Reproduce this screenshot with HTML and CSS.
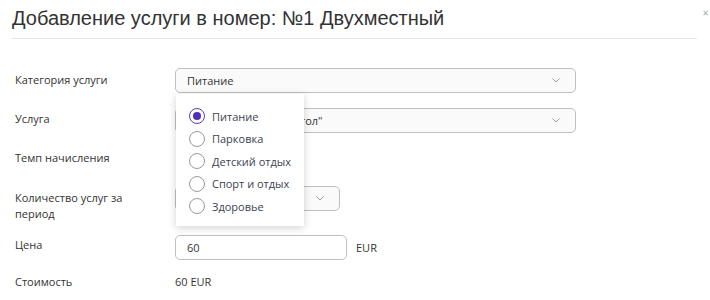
FILE: index.html
```html
<!DOCTYPE html>
<html lang="ru">
<head>
<meta charset="utf-8">
<link rel="stylesheet" href="styles.css">
</head>
<body>
<div class="modal">
  <div class="header">
    <h1 class="title">Добавление услуги в номер: №1 Двухместный</h1>
    <span class="close">&#x2715;</span>
  </div>
  <div class="form">
    <div class="row r1">
      <div class="label">Категория услуги</div>
      <div class="field">
        <div class="select wide"><span>Питание</span><svg class="chev" viewBox="0 0 8 5"><path d="M0.5 0.5 L4 4 L7.5 0.5" fill="none" stroke="#999" stroke-width="1"/></svg></div>
        <div class="menu">
          <div class="opt"><span class="radio on"></span>Питание</div>
          <div class="opt"><span class="radio"></span>Парковка</div>
          <div class="opt"><span class="radio"></span>Детский отдых</div>
          <div class="opt"><span class="radio"></span>Спорт и отдых</div>
          <div class="opt"><span class="radio"></span>Здоровье</div>
        </div>
      </div>
    </div>
    <div class="row r2">
      <div class="label">Услуга</div>
      <div class="field">
        <div class="select wide"><span>Завтрак "Шведский стол"</span><svg class="chev" viewBox="0 0 8 5"><path d="M0.5 0.5 L4 4 L7.5 0.5" fill="none" stroke="#999" stroke-width="1"/></svg></div>
      </div>
    </div>
    <div class="row r3">
      <div class="label">Темп начисления</div>
      <div class="field"></div>
    </div>
    <div class="row r4">
      <div class="label">Количество услуг за<br>период</div>
      <div class="field">
        <div class="select small"><span>1</span><svg class="chev" viewBox="0 0 8 5"><path d="M0.5 0.5 L4 4 L7.5 0.5" fill="none" stroke="#999" stroke-width="1"/></svg></div>
      </div>
    </div>
    <div class="row r5">
      <div class="label">Цена</div>
      <div class="field inline">
        <div class="input">60</div>
        <span class="unit">EUR</span>
      </div>
    </div>
    <div class="row r6">
      <div class="label">Стоимость</div>
      <div class="field"><span class="value">60 EUR</span></div>
    </div>
  </div>
</div>
</body>
</html>
```
FILE: styles.css
```css
* { box-sizing: border-box; }
html, body { margin: 0; padding: 0; background: #fff; }
body {
  font-family: "Open Sans", "Noto Sans", sans-serif;
  font-size: 11px;
  color: #333;
  width: 710px;
  height: 300px;
  overflow: hidden;
}
.modal { padding: 0 13px 0 12px; }
.header {
  position: relative;
  height: 39px;
  border-bottom: 1px solid #e5e5e5;
}
.title {
  margin: 0;
  padding-top: 6px;
  font-family: "Liberation Sans", Arial, sans-serif;
  font-weight: normal;
  font-size: 20px;
  line-height: 24px;
  color: #333;
}
.close {
  position: absolute;
  right: -12px;
  top: 9px;
  font-size: 8px;
  color: #aaa;
  font-family: "DejaVu Sans", sans-serif;
}
.form { padding-left: 3px; }
.row {
  display: grid;
  grid-template-columns: 160px 1fr;
  align-items: start;
}
.label { line-height: 16px; color: #333; }
.field { position: relative; }
.r1 { margin-top: 29px; }
.r1 .label { padding-top: 4px; }
.r2 { margin-top: 15px; }
.r2 .label { padding-top: 3px; }
.r3 { margin-top: 17px; height: 22px; }
.r3 .label { padding-top: 0; }
.r4 { margin-top: 14px; }
.r4 .label { padding-top: 4px; }
.r5 { margin-top: 13px; }
.r5 .label { padding-top: 2px; }
.r6 { margin-top: 14px; }
.select {
  height: 25px;
  border: 1px solid #bfbfbf;
  border-radius: 5px;
  background: #fafafa;
  display: flex;
  align-items: center;
  justify-content: space-between;
  padding: 0 15px 0 11px;
  color: #333;
}
.select.wide { width: 401px; }
.select.small { width: 165px; }
.chev { width: 8px; height: 5px; }
.inline { display: flex; align-items: center; gap: 9px; }
.input {
  width: 172px;
  height: 25px;
  border: 1px solid #bfbfbf;
  border-radius: 5px;
  background: #fff;
  padding: 0 11px;
  display: flex;
  align-items: center;
}
.unit { color: #333; }
.value { line-height: 16px; }
.menu {
  position: absolute;
  left: 1px;
  top: 26px;
  width: 128px;
  height: 132px;
  background: #fff;
  box-shadow: 0 2px 8px rgba(0,0,0,0.18);
  padding: 11px 0 0 13px;
  z-index: 5;
}
.opt {
  display: flex;
  align-items: center;
  height: 22.5px;
  color: #3c3f52;
}
.radio {
  width: 16px;
  height: 16px;
  border-radius: 50%;
  border: 1.5px solid #9a9a9a;
  margin-right: 7px;
  background: #fff;
  display: flex;
  align-items: center;
  justify-content: center;
  flex: none;
}
.radio.on { border-color: #5b3fc0; }
.radio.on::after {
  content: "";
  width: 8px;
  height: 8px;
  border-radius: 50%;
  background: #4f2fb5;
}
```
